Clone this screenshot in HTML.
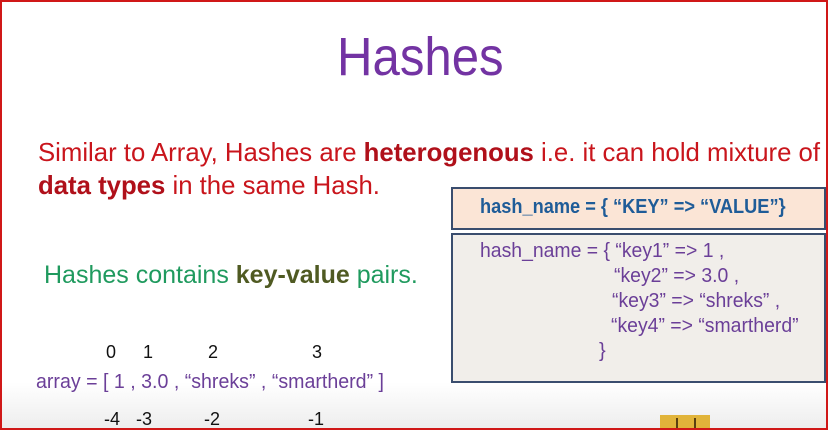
<!DOCTYPE html>
<html><head><meta charset="utf-8"><style>
html,body{margin:0;padding:0}
body{width:828px;height:430px;position:relative;overflow:hidden;background:#fff;font-family:"Liberation Sans",sans-serif}
.frame{position:absolute;left:0;top:0;width:824px;height:426px;border:2px solid #d01818;background:linear-gradient(#fff 0,#fff 380px,#ececec 430px)}
.t{position:absolute;white-space:nowrap;transform-origin:0 0;line-height:1}
.box{position:absolute;border:2px solid #3a4d6e;box-sizing:border-box}
</style></head><body>
<div class="frame"></div>
<div class="t" style="left:337px;top:30px;font-size:54px;color:#7333a3;transform:scaleX(0.91)">Hashes</div>
<div class="t" style="left:38px;top:139px;font-size:26px;color:#c9151c;transform:scaleX(0.99)">Similar to Array, Hashes are <b style="color:#b0101a">heterogenous</b> i.e. it can hold mixture of</div>
<div class="t" style="left:38px;top:172px;font-size:26px;color:#c9151c;transform:scaleX(0.99)"><b style="color:#b0101a">data types</b> in the same Hash.</div>
<div class="box" style="left:451px;top:187px;width:375px;height:43px;background:#fbe5d6"></div>
<div class="t" style="left:480px;top:197px;font-size:20px;font-weight:bold;color:#1f5c98;transform:scaleX(0.91)">hash_name = { “KEY” =&gt; “VALUE”}</div>
<div class="box" style="left:451px;top:233px;width:375px;height:150px;background:#f1eeea"></div>
<div class="t" style="left:480px;top:241px;font-size:20px;color:#6b3f98;transform:scaleX(0.97)">hash_name = { “key1” =&gt; 1 ,</div>
<div class="t" style="left:614px;top:266px;font-size:20px;color:#6b3f98;transform:scaleX(0.97)">“key2” =&gt; 3.0 ,</div>
<div class="t" style="left:612px;top:291px;font-size:20px;color:#6b3f98;transform:scaleX(0.97)">“key3” =&gt; “shreks” ,</div>
<div class="t" style="left:611px;top:316px;font-size:20px;color:#6b3f98;transform:scaleX(0.97)">“key4” =&gt; “smartherd”</div>
<div class="t" style="left:599px;top:341px;font-size:20px;color:#6b3f98">}</div>
<div class="t" style="left:44px;top:263px;font-size:25px;color:#1f9a5e;transform:scaleX(1.0)">Hashes contains <b style="color:#4f5a22">key-value</b> pairs.</div>
<div class="t" style="left:106px;top:343px;font-size:18px;color:#111">0</div>
<div class="t" style="left:143px;top:343px;font-size:18px;color:#111">1</div>
<div class="t" style="left:208px;top:343px;font-size:18px;color:#111">2</div>
<div class="t" style="left:312px;top:343px;font-size:18px;color:#111">3</div>
<div class="t" style="left:36px;top:372px;font-size:20px;color:#6b3f98;transform:scaleX(0.98)">array = [ 1 , 3.0 , “shreks” , “smartherd” ]</div>
<div class="t" style="left:104px;top:410px;font-size:18px;color:#111">-4</div>
<div class="t" style="left:136px;top:410px;font-size:18px;color:#111">-3</div>
<div class="t" style="left:204px;top:410px;font-size:18px;color:#111">-2</div>
<div class="t" style="left:308px;top:410px;font-size:18px;color:#111">-1</div>
<div style="position:absolute;left:660px;top:415px;width:50px;height:13px;background:#e1b43a"></div>
<div style="position:absolute;left:676px;top:418px;width:2px;height:10px;background:#5a4010"></div>
<div style="position:absolute;left:694px;top:418px;width:2px;height:10px;background:#5a4010"></div>
</body></html>
